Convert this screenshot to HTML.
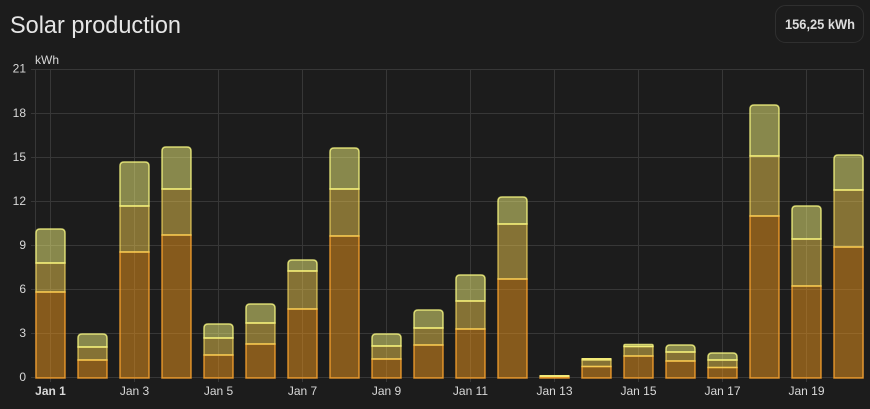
<!DOCTYPE html>
<html><head><meta charset="utf-8">
<style>
html,body{margin:0;padding:0;background:#1c1c1c}
svg{display:block}
text{font-family:"Liberation Sans",sans-serif;fill:#d8d8d8;font-size:12px}
.x{text-anchor:middle}.y{text-anchor:end}
.o{fill:rgba(240,152,28,.5);stroke:rgba(255,165,45,.8);stroke-width:1.5}
.m{fill:rgba(248,208,82,.48);stroke:rgba(255,225,100,.65);stroke-width:1.5}
.t{fill:rgba(255,255,130,.48);stroke:rgba(250,250,130,.8);stroke-width:1.5}
.l{fill:#f2ea78;stroke:none}
</style></head><body>
<svg width="870" height="409" viewBox="0 0 870 409" xmlns="http://www.w3.org/2000/svg">
<rect width="870" height="409" fill="#1c1c1c"/>
<text x="10" y="33" style="font-size:24px;fill:#e5e5e5" textLength="171" lengthAdjust="spacingAndGlyphs">Solar production</text>
<rect x="775.5" y="5.5" width="88" height="37" rx="10" fill="none" stroke="#2f2f2f"/>
<text x="785" y="29" style="font-size:14px;font-weight:bold;fill:#dcdcdc" textLength="70" lengthAdjust="spacingAndGlyphs">156,25 kWh</text>
<text x="35" y="64">kWh</text>
<g stroke="#373737" stroke-width="1">
<path d="M31 69.5H864M31 113.5H864M31 157.5H864M31 201.5H864M31 245.5H864M31 289.5H864M31 333.5H864M31 377.5H864"/>
<path d="M35.5 69V378M863.5 69V378M50.5 69V382M134.5 69V382M218.5 69V382M302.5 69V382M386.5 69V382M470.5 69V382M554.5 69V382M638.5 69V382M722.5 69V382M806.5 69V382"/>
</g>
<text class="y" x="26" y="72.5">21</text><text class="y" x="26" y="117">18</text><text class="y" x="26" y="161">15</text><text class="y" x="26" y="205">12</text><text class="y" x="26" y="249">9</text><text class="y" x="26" y="293">6</text><text class="y" x="26" y="337">3</text><text class="y" x="26" y="381">0</text>
<text class="x" x="50.5" y="395" style="font-weight:bold">Jan 1</text><text class="x" x="134.5" y="395">Jan 3</text><text class="x" x="218.5" y="395">Jan 5</text><text class="x" x="302.5" y="395">Jan 7</text><text class="x" x="386.5" y="395">Jan 9</text><text class="x" x="470.5" y="395">Jan 11</text><text class="x" x="554.5" y="395">Jan 13</text><text class="x" x="638.5" y="395">Jan 15</text><text class="x" x="722.5" y="395">Jan 17</text><text class="x" x="806.5" y="395">Jan 19</text>

<g><rect class="o" x="36" y="292" width="29" height="86"/><rect class="m" x="36" y="263" width="29" height="29"/><path class="t" d="M36 263V233q0-4 4-4h21q4 0 4 4V263z"/></g>
<g transform="translate(42)"><rect class="o" x="36" y="360" width="29" height="18"/><rect class="m" x="36" y="347" width="29" height="13"/><path class="t" d="M36 347V338q0-4 4-4h21q4 0 4 4V347z"/></g>
<g transform="translate(84)"><rect class="o" x="36" y="252" width="29" height="126"/><rect class="m" x="36" y="206" width="29" height="46"/><path class="t" d="M36 206V166q0-4 4-4h21q4 0 4 4V206z"/></g>
<g transform="translate(126)"><rect class="o" x="36" y="235" width="29" height="143"/><rect class="m" x="36" y="189" width="29" height="46"/><path class="t" d="M36 189V151q0-4 4-4h21q4 0 4 4V189z"/></g>
<g transform="translate(168)"><rect class="o" x="36" y="355" width="29" height="23"/><rect class="m" x="36" y="338" width="29" height="17"/><path class="t" d="M36 338V328q0-4 4-4h21q4 0 4 4V338z"/></g>
<g transform="translate(210)"><rect class="o" x="36" y="344" width="29" height="34"/><rect class="m" x="36" y="323" width="29" height="21"/><path class="t" d="M36 323V308q0-4 4-4h21q4 0 4 4V323z"/></g>
<g transform="translate(252)"><rect class="o" x="36" y="309" width="29" height="69"/><rect class="m" x="36" y="271" width="29" height="38"/><path class="t" d="M36 271V264q0-4 4-4h21q4 0 4 4V271z"/></g>
<g transform="translate(294)"><rect class="o" x="36" y="236" width="29" height="142"/><rect class="m" x="36" y="189" width="29" height="47"/><path class="t" d="M36 189V152q0-4 4-4h21q4 0 4 4V189z"/></g>
<g transform="translate(336)"><rect class="o" x="36" y="359" width="29" height="19"/><rect class="m" x="36" y="346" width="29" height="13"/><path class="t" d="M36 346V338q0-4 4-4h21q4 0 4 4V346z"/></g>
<g transform="translate(378)"><rect class="o" x="36" y="345" width="29" height="33"/><rect class="m" x="36" y="328" width="29" height="17"/><path class="t" d="M36 328V314q0-4 4-4h21q4 0 4 4V328z"/></g>
<g transform="translate(420)"><rect class="o" x="36" y="329" width="29" height="49"/><rect class="m" x="36" y="301" width="29" height="28"/><path class="t" d="M36 301V279q0-4 4-4h21q4 0 4 4V301z"/></g>
<g transform="translate(462)"><rect class="o" x="36" y="279" width="29" height="99"/><rect class="m" x="36" y="224" width="29" height="55"/><path class="t" d="M36 224V201q0-4 4-4h21q4 0 4 4V224z"/></g>
<g transform="translate(504)"><rect class="o" x="36" y="377" width="29" height="1"/><rect class="l" x="35.5" y="375" width="30" height="2"/></g>
<g transform="translate(546)"><rect class="o" x="36" y="366.5" width="29" height="11.5"/><rect class="m" x="36" y="360" width="29" height="6.5"/><rect class="l" x="35.5" y="358" width="30" height="2.5"/></g>
<g transform="translate(588)"><rect class="o" x="36" y="356" width="29" height="22"/><rect class="m" x="36" y="346.5" width="29" height="9.5"/><path class="t" d="M36 346.5V345.5q0-1 1-1h27q1 0 1 1V346.5z"/></g>
<g transform="translate(630)"><rect class="o" x="36" y="361" width="29" height="17"/><rect class="m" x="36" y="352" width="29" height="9"/><path class="t" d="M36 352V349q0-4 4-4h21q4 0 4 4V352z"/></g>
<g transform="translate(672)"><rect class="o" x="36" y="367.5" width="29" height="10.5"/><rect class="m" x="36" y="360" width="29" height="7.5"/><path class="t" d="M36 360V357q0-4 4-4h21q4 0 4 4V360z"/></g>
<g transform="translate(714)"><rect class="o" x="36" y="216" width="29" height="162"/><rect class="m" x="36" y="156" width="29" height="60"/><path class="t" d="M36 156V109q0-4 4-4h21q4 0 4 4V156z"/></g>
<g transform="translate(756)"><rect class="o" x="36" y="286" width="29" height="92"/><rect class="m" x="36" y="239" width="29" height="47"/><path class="t" d="M36 239V210q0-4 4-4h21q4 0 4 4V239z"/></g>
<g transform="translate(798)"><rect class="o" x="36" y="247" width="29" height="131"/><rect class="m" x="36" y="190" width="29" height="57"/><path class="t" d="M36 190V159q0-4 4-4h21q4 0 4 4V190z"/></g>
</svg>
</body></html>
